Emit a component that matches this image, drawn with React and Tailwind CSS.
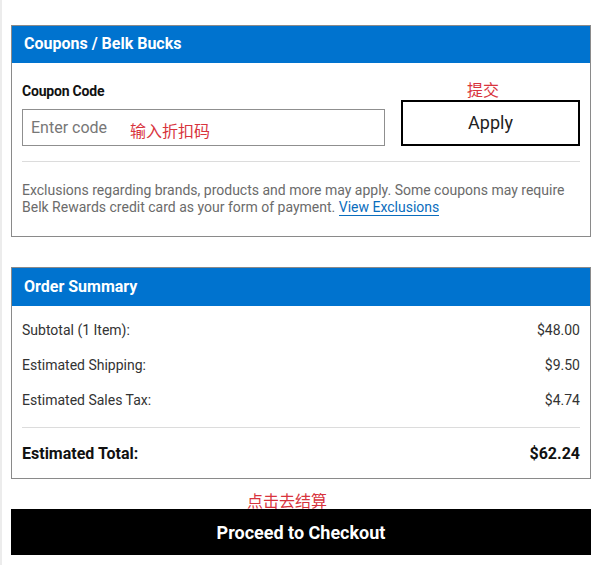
import React from 'react';

const font = { fontFamily: 'Roboto, "Noto Sans CJK SC", sans-serif' };

const Note = ({ className, children }) => (
    <span className={`absolute text-[16px] leading-none text-[#d8343d] ${className}`} style={{ fontFamily: '"Noto Sans CJK SC", sans-serif' }}>
        {children}
    </span>
);

const Row = ({ label, value }) => (
    <div className="flex justify-between text-[14px] leading-[20px] text-[#333]">
        <span>{label}</span>
        <span>{value}</span>
    </div>
);

const App = () => {
    return (
        <div className="relative min-h-[565px] w-[600px] bg-white border-l-2 border-[#ececec]" style={font}>
            <div className="pl-[9px] pr-[9px] pt-[25px]">
                {/* coupons */}
                <section className="relative border border-[#8a8a8a]">
                    <header className="bg-[#0073cf] h-[37px] px-3 pb-[1px] flex items-center text-white text-[16px] font-bold">
                        Coupons / Belk Bucks
                    </header>
                    <div className="px-[10px] pb-[20px]">
                        <div className="flex items-end gap-4 pt-[20px]">
                            <div className="flex-1">
                                <label className="block text-[14px] leading-[17px] font-bold text-[#111] mb-[9px] tracking-[-0.2px]">Coupon Code</label>
                                <input
                                    type="text"
                                    placeholder="Enter code"
                                    className="w-full h-[37px] border border-[#8f8f8f] px-2 text-[16px] placeholder:text-[#777] outline-none"
                                    style={font}
                                />
                            </div>
                            <button className="w-[179px] h-[46px] pb-[2px] border-2 border-black text-[18px] text-[#222] bg-white">Apply</button>
                        </div>
                        <div className="border-t border-[#dcdcdc] mt-[15px] pt-[20px] text-[14px] leading-[17px] text-[#6b6b6b]">
                            <p>
                                Exclusions regarding brands, products and more may apply. Some coupons may require Belk Rewards credit card as your form of payment.{' '}
                                <a href="#" className="text-[#0a6dbd] border-b border-[#0a6dbd]">View Exclusions</a>
                            </p>
                        </div>
                    </div>
                    <Note className="left-[118px] top-[96px]">输入折扣码</Note>
                    <Note className="left-[455px] top-[55px]">提交</Note>
                </section>

                {/* order summary */}
                <section className="mt-[30px] border border-[#8a8a8a]">
                    <header className="bg-[#0073cf] h-[38px] px-3 pb-[1px] flex items-center text-white text-[16px] font-bold">
                        Order Summary
                    </header>
                    <div className="px-[10px] pt-[14px] pb-[12px]">
                        <div className="flex flex-col gap-[15px]">
                            <Row label="Subtotal (1 Item):" value="$48.00" />
                            <Row label="Estimated Shipping:" value="$9.50" />
                            <Row label="Estimated Sales Tax:" value="$4.74" />
                        </div>
                        <div className="border-t border-[#dcdcdc] mt-[17px] pt-[14px] flex justify-between text-[16px] leading-[24px] font-bold text-[#111]">
                            <span>Estimated Total:</span>
                            <span>$62.24</span>
                        </div>
                    </div>
                </section>

                <div className="relative mt-[30px]">
                    <Note className="left-[236px] -top-[17px]">点击去结算</Note>
                    <button className="w-full h-[46px] bg-black text-white text-[18px] font-bold">Proceed to Checkout</button>
                </div>
            </div>
        </div>
    );
};

export default App;
